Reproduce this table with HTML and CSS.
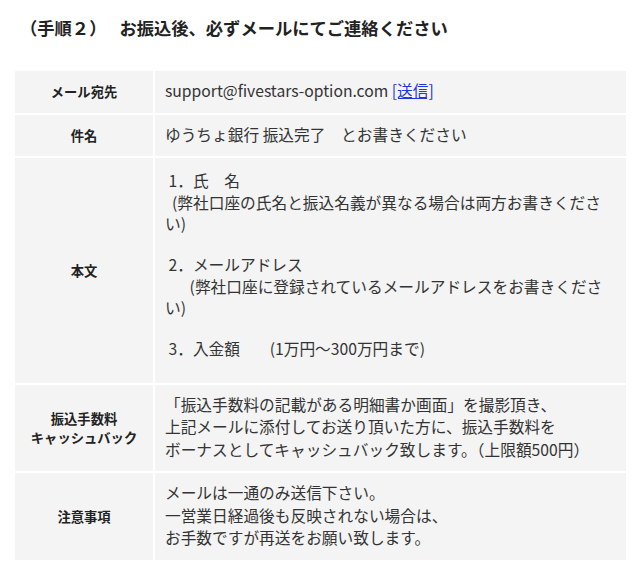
FILE: index.html
```html
<!DOCTYPE html>
<html lang="ja">
<head>
<meta charset="utf-8">
<link rel="stylesheet" href="styles.css">
</head>
<body>
<div class="page">
  <h2 class="title"><span class="step">（手順２）</span><span>お振込後、必ずメールにてご連絡ください</span></h2>
  <table class="info">
    <tr>
      <th>メール宛先</th>
      <td>support@fivestars-option.com <a href="#" class="send">[送信]</a></td>
    </tr>
    <tr>
      <th>件名</th>
      <td>ゆうちょ銀行 振込完了　とお書きください</td>
    </tr>
    <tr>
      <th>本文</th>
      <td class="body-cell">
        <p>&nbsp;1．氏　名<br>&nbsp;&nbsp;(弊社口座の氏名と振込名義が異なる場合は両方お書きください)</p>
        <p>&nbsp;2．メールアドレス<br>&nbsp;&nbsp;&nbsp;&nbsp;&nbsp;&nbsp;&nbsp;(弊社口座に登録されているメールアドレスをお書きください)</p>
        <p>&nbsp;3．入金額　&nbsp;&nbsp;&nbsp;&nbsp;(1万円～300万円まで)</p>
      </td>
    </tr>
    <tr>
      <th>振込手数料<br>キャッシュバック</th>
      <td>「振込手数料の記載がある明細書か画面」を撮影頂き、<br>上記メールに添付してお送り頂いた方に、振込手数料を<br>ボーナスとしてキャッシュバック致します。（上限額500円）</td>
    </tr>
    <tr>
      <th>注意事項</th>
      <td>メールは一通のみ送信下さい。<br>一営業日経過後も反映されない場合は、<br>お手数ですが再送をお願い致します。</td>
    </tr>
  </table>
</div>
</body>
</html>
```

FILE: styles.css
```css
html, body {
  margin: 0;
  padding: 0;
  background: #fff;
}
.page {
  padding: 17px 14px 0 15px;
  font-family: "Noto Sans CJK JP", "Noto Sans", sans-serif;
  color: #333;
}
.title {
  margin: 0 0 32px 5px;
  font-size: 17.3px;
  line-height: 22px;
  font-weight: bold;
  color: #222;
}
.step {
  margin-right: 13px;
}
.info {
  width: 100%;
  border-collapse: collapse;
  background: #f4f4f4;
  font-size: 15.7px;
  line-height: 22.5px;
}
.info th,
.info td {
  border: 2px solid #fff;
  vertical-align: middle;
}
.info tr:first-child th,
.info tr:first-child td {
  border-top: 0;
}
.info tr:last-child th,
.info tr:last-child td {
  border-bottom: 0;
}
.info th {
  border-left: 0;
  width: 138px;
  font-size: 13.3px;
  line-height: 19px;
  font-weight: bold;
  color: #222;
  text-align: center;
  padding: 9px 0;
}
.info td {
  border-right: 0;
  padding: 9px 10px 10px;
}
.info .body-cell {
  padding: 12px 20px 23px 10px;
  line-height: 21.5px;
}
.body-cell p {
  margin: 0 0 19.5px 0;
}
.body-cell p:last-child {
  margin-bottom: 0;
}
.send {
  color: #2233dd;
  text-decoration: underline;
}
```
